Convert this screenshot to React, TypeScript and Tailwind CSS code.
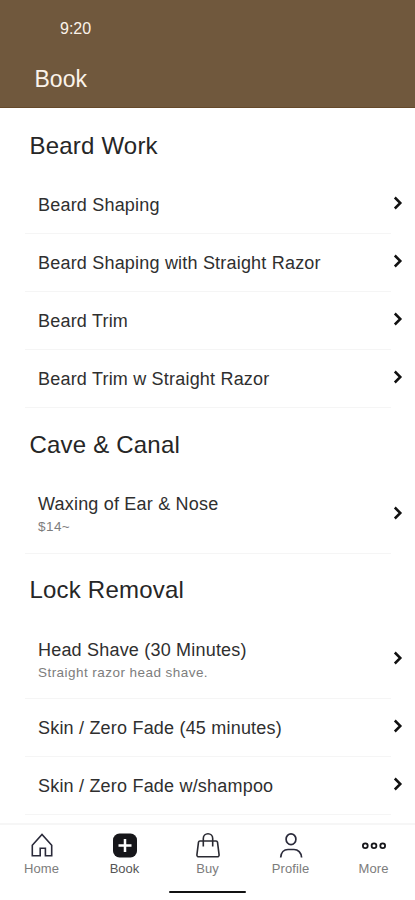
import type { ReactNode } from 'react';

type Service = { name: string; note?: string };

const SECTIONS: { title: string; items: Service[] }[] = [
  {
    title: 'Beard Work',
    items: [
      { name: 'Beard Shaping' },
      { name: 'Beard Shaping with Straight Razor' },
      { name: 'Beard Trim' },
      { name: 'Beard Trim w Straight Razor' },
    ],
  },
  {
    title: 'Cave & Canal',
    items: [{ name: 'Waxing of Ear & Nose', note: '$14~' }],
  },
  {
    title: 'Lock Removal',
    items: [
      { name: 'Head Shave (30 Minutes)', note: 'Straight razor head shave.' },
      { name: 'Skin / Zero Fade (45 minutes)' },
      { name: 'Skin / Zero Fade w/shampoo' },
    ],
  },
];

const HomeIcon = () => (
  <svg width="28" height="28" viewBox="0 0 28 28" fill="none" stroke="#2a2a3a" strokeWidth="1.6">
    <path d="M4.300 14.200 14 3.500l9.700 10.700v10.600h-6.300v-7.600h-5.200v7.600H4.300z" />
  </svg>
);

const BookIcon = () => (
  <svg width="28" height="28" viewBox="0 0 28 28" fill="none">
    <rect x="2" y="2.500" width="24" height="24" rx="6.500" fill="#16161a" />
    <path d="M14 8v13M7.500 14.500h13" stroke="#fff" strokeWidth="2.500" />
  </svg>
);

const BuyIcon = () => (
  <svg width="28" height="28" viewBox="0 0 28 28" fill="none" stroke="#2a2a32" strokeWidth="1.600">
    <path d="M6 10h16a1.500 1.500 0 0 1 1.500 1.200l1.600 12.600a1.800 1.800 0 0 1-1.800 2H4.700a1.800 1.800 0 0 1-1.800-2l1.600-12.600A1.500 1.500 0 0 1 6 10z" />
    <path d="M9.300 15.500V7.500a4.700 4.700 0 0 1 9.400 0v8" />
  </svg>
);

const ProfileIcon = () => (
  <svg width="28" height="28" viewBox="0 0 28 28" fill="none" stroke="#2a2a3a" strokeWidth="1.700">
    <ellipse cx="14" cy="8.200" rx="4.900" ry="5.400" />
    <path d="M3.700 26.500c.3-4.800 3.300-8 7.300-8h6c4 0 7.300 3.200 7.600 8" />
  </svg>
);

const MoreIcon = () => (
  <svg width="28" height="28" viewBox="0 0 28 28" fill="none" stroke="#16161a" strokeWidth="1.800">
    <circle cx="5.300" cy="14.700" r="2.400" />
    <circle cx="14" cy="14.700" r="2.400" />
    <circle cx="22.700" cy="14.700" r="2.400" />
  </svg>
);

const TABS: { label: string; icon: ReactNode; active?: boolean }[] = [
  { label: 'Home', icon: <HomeIcon /> },
  { label: 'Book', icon: <BookIcon />, active: true },
  { label: 'Buy', icon: <BuyIcon /> },
  { label: 'Profile', icon: <ProfileIcon /> },
  { label: 'More', icon: <MoreIcon /> },
];

function Chevron() {
  return (
    <svg className="shrink-0" width="10" height="14" viewBox="0 0 10 14" fill="none" stroke="#111" strokeWidth="2.500">
      <path d="M1.800 1.500 7.300 7l-5.500 5.500" />
    </svg>
  );
}

function ServiceRow({ item }: { item: Service }) {
  return (
    <li>
      <button className={item.note ? 'flex h-[78.5px] w-full text-left' : 'flex h-[58px] w-full text-left'}>
        <div className="h-full w-[366px] border-b border-[#f5f5f5] pl-[13px] pt-[17px]">
          <p className="text-[18px] leading-6 tracking-[0.2px] text-[#2f2f2f]">{item.name}</p>
          {item.note && <p className="text-[13.5px] leading-[22px] tracking-[0.45px] text-[#7d7d7d]">{item.note}</p>}
        </div>
        <div className="flex h-full items-center pb-[3.5px] pl-[2px]">
          <Chevron />
        </div>
      </button>
    </li>
  );
}

export default function App() {
  return (
    <div className="flex h-[900px] w-full flex-col overflow-hidden bg-white font-['Liberation_Sans',Arial,sans-serif]">
      <header className="h-[108px] shrink-0 border-b border-[#65492a] bg-[#70583d] text-[#fbf3ea]">
        <div className="pl-[60px] pt-[19px] text-[16px] leading-5">9:20</div>
        <h1 className="pl-[34.5px] pt-[26px] text-[23px] leading-7">Book</h1>
      </header>

      <main className="min-h-0 flex-1 overflow-hidden pl-[25px] pt-px">
        {SECTIONS.map((section) => (
          <section key={section.title}>
            <h2 className="h-[67px] pl-[4.5px] pt-[20.5px] text-[24px] leading-8 tracking-[0.2px] text-[#262626]">
              {section.title}
            </h2>
            <ul>
              {section.items.map((item) => (
                <ServiceRow key={item.name} item={item} />
              ))}
            </ul>
          </section>
        ))}
      </main>

      <nav className="flex h-[77px] shrink-0 flex-col items-center border-t-2 border-[#f6f6f6]">
        <div className="grid w-full grid-cols-5 pt-[6px]">
          {TABS.map((tab) => (
            <button key={tab.label} className="flex flex-col items-center">
              {tab.icon}
              <span
                className={
                  tab.active
                    ? 'mt-[2px] text-[13px] leading-4 text-[#555]'
                    : 'mt-[2px] text-[13px] leading-4 tracking-[0.1px] text-[#7c7c7c]'
                }
              >
                {tab.label}
              </span>
            </button>
          ))}
        </div>
        <div className="mt-[14px] h-[2px] w-[77px] rounded-full bg-[#111]" />
      </nav>
    </div>
  );
}
